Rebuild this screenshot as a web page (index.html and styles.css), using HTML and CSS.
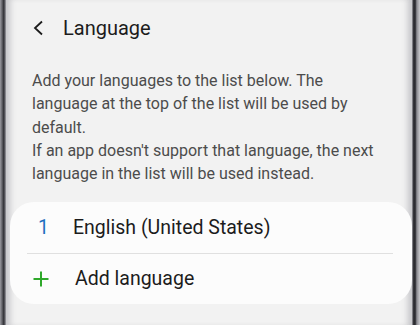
FILE: index.html
```html
<!DOCTYPE html>
<html lang="en">
  <head>
    <meta charset="UTF-8" />
    <meta name="viewport" content="width=device-width, initial-scale=1.0" />
    <title>Language</title>
    <link rel="stylesheet" href="styles.css">
  </head>
  <body>
    <div class="phone">
      <div class="bezel bezel-left"></div>
      <div class="screen">
        <header class="header">
          <svg class="back" width="12" height="16" viewBox="0 0 12 16">
            <polyline points="10,1.5 3,8 10,14.5" fill="none" stroke="#1c1c1c" stroke-width="1.8" />
          </svg>
          <h1>Language</h1>
        </header>
        <p class="desc">
          Add your languages to the list below. The language at the top of the list will be used by default.<br />
          If an app doesn't support that language, the next language in the list will be used instead.
        </p>
        <div class="card">
          <div class="row">
            <span class="num">1</span>
            <span class="label">English (United States)</span>
          </div>
          <div class="divider"></div>
          <div class="row add">
            <svg class="plus" width="16" height="16" viewBox="0 0 16 16">
              <path d="M8 0.5V15.5M0.5 8H15.5" stroke="#2fa82b" stroke-width="2" />
            </svg>
            <span class="label">Add language</span>
          </div>
        </div>
      </div>
      <div class="bezel bezel-right"></div>
    </div>
  </body>
</html>
```

FILE: styles.css
```css
body {
  margin: 0;
  font-family: Roboto, "Liberation Sans", sans-serif;
  background: #f2f2f2;
}
.phone {
  display: flex;
  height: 325px;
  overflow: hidden;
}
.bezel {
  flex: none;
}
.bezel-left {
  width: 6px;
  background: linear-gradient(to right, #9a9aa0, #6a6a70 30%, #35353a 60%, #5a5a60 80%, #a8a8ae);
}
.bezel-right {
  width: 8px;
  background: linear-gradient(to right, #a0a0a6, #2e2e33 20%, #2a2a2f 40%, #8a8a90 60%, #c8c8cc);
}
.screen {
  flex: 1;
  background: #f2f2f2;
  box-shadow: inset 8px 0 6px -4px #c4c4c8, inset -8px 0 6px -4px #c4c4c8;
}

.header {
  display: flex;
  align-items: center;
  height: 56px;
  padding-left: 26px;
}
.back {
  margin-right: 19px;
}
h1 {
  margin: 0;
  font-size: 20px;
  font-weight: 400;
  color: #1c1c1c;
}

.desc {
  margin: 13px 0 0 26px;
  width: 360px;
  font-size: 16px;
  line-height: 23.3px;
  color: #4c4c4c;
}

.card {
  margin: 16.5px 0 0 4px;
  width: 402px;
  background: #fcfcfc;
  border-radius: 24px;
}
.row {
  display: flex;
  align-items: center;
  height: 51px;
  font-size: 19.5px;
  color: #1c1c1c;
}
.num {
  width: 63px;
  padding-left: 28px;
  box-sizing: border-box;
  color: #1d6fbf;
}
.add {
  height: 50px;
}
.plus {
  margin-left: 23px;
  margin-right: 26px;
}
.divider {
  height: 1px;
  margin: 0 19px 0 17px;
  background: #e0e0e0;
}
```
